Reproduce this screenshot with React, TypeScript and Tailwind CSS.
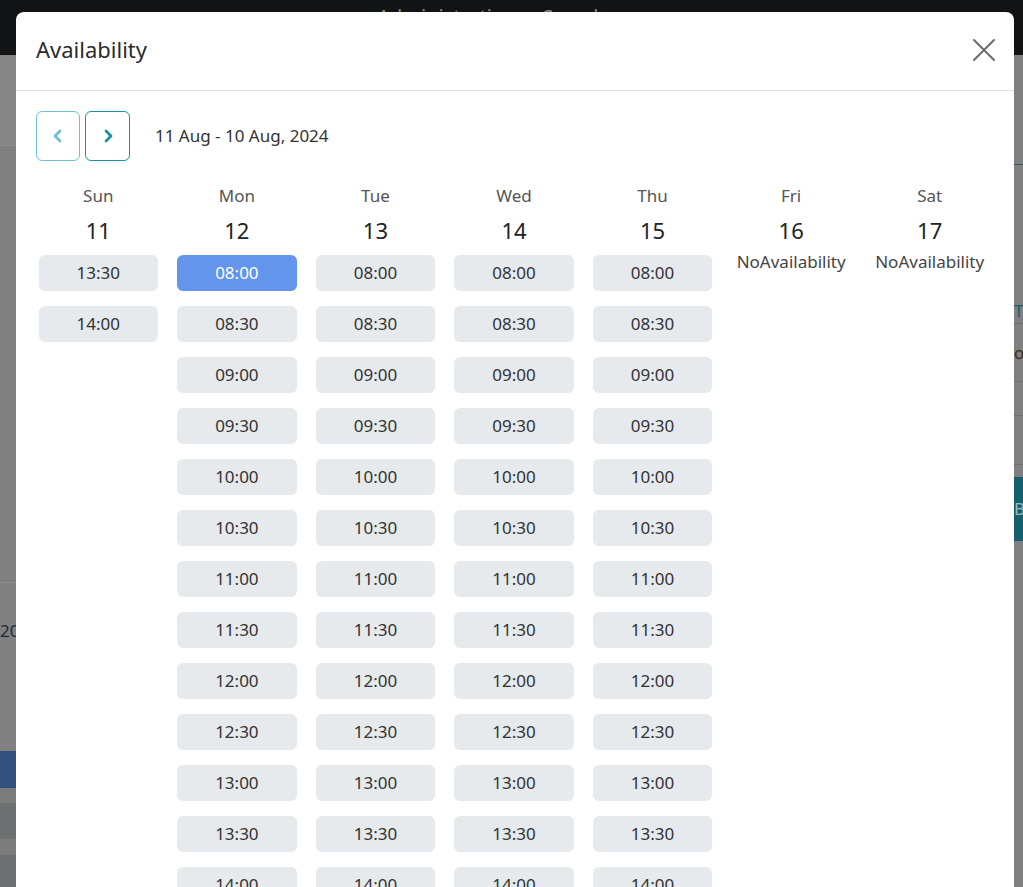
import React from "react";

const allSlots = [
  "08:00", "08:30", "09:00", "09:30", "10:00", "10:30", "11:00", "11:30",
  "12:00", "12:30", "13:00", "13:30", "14:00", "14:30", "15:00", "15:30",
];

const days = [
  { name: "Sun", date: 11, slots: ["13:30", "14:00"] },
  { name: "Mon", date: 12, slots: allSlots },
  { name: "Tue", date: 13, slots: allSlots },
  { name: "Wed", date: 14, slots: allSlots },
  { name: "Thu", date: 15, slots: allSlots },
  { name: "Fri", date: 16, slots: [] as string[] },
  { name: "Sat", date: 17, slots: [] as string[] },
];

function Chevron({ dir }: { dir: "left" | "right" }) {
  return (
    <svg width="18" height="18" viewBox="0 0 18 18" fill="none" stroke="currentColor" strokeWidth="2.8" strokeLinecap="round" strokeLinejoin="round">
      {dir === "left" ? <path d="M11 4 6 9l5 5" /> : <path d="M7 4l5 5-5 5" />}
    </svg>
  );
}

export default function App() {
  return (
    <div className="relative h-[887px] w-full overflow-hidden bg-[#808080] font-['Noto_Sans',sans-serif]">
      {/* page behind the dialog */}
      <div className="flex h-[55px] justify-center bg-[#121315] pt-[2px] text-[20px] text-[#8a8b8d]">
        <span className="ml-[-40px]">Administration &nbsp;&nbsp;&nbsp; Search</span>
      </div>
      <div className="flex justify-between">
        <div className="flex w-4 flex-col overflow-hidden whitespace-nowrap">
          <div className="h-[90px] bg-[#858585]" />
          <div className="h-px bg-[#8c8c8c]" />
          <div className="h-[436px]" />
          <div className="h-px bg-[#8d8d8d]" />
          <div className="h-[36px]" />
          <div className="text-[17px] leading-6 text-[#1d2a36]">20</div>
          <div className="h-[108px]" />
          <div className="h-[37px] bg-[#34507f]" />
          <div className="h-[15px] bg-[#7c7c7c]" />
          <div className="h-[36px] bg-[#6d7070]" />
          <div className="h-[16px] bg-[#7c7c7c]" />
          <div className="h-[40px] bg-[#6d7070]" />
        </div>
        <div className="flex w-[9px] flex-col overflow-hidden whitespace-nowrap">
          <div className="h-[109px]" />
          <div className="h-px bg-[#1f5f69]" />
          <div className="h-[134px]" />
          <div className="text-[17px] leading-6 text-[#135e6b]">Ti</div>
          <div className="h-px bg-[#6e6e6e]" />
          <div className="flex h-[58px] items-center border-b border-[#707070] text-[17px] text-[#3a2a10]">o .</div>
          <div className="h-[34px] border-b border-[#707070]" />
          <div className="h-[49px] border-b border-[#707070]" />
          <div className="h-[12px]" />
          <div className="flex h-[64px] items-center bg-[#145f6b] text-[17px] text-[#9fb8bd]">Bo</div>
        </div>
      </div>

      {/* dialog */}
      <div className="absolute left-4 top-3 w-[998px] rounded-lg bg-white">
        <div className="flex h-[79px] items-center justify-between border-b border-[#dee2e6] pb-[3px] pl-5 pr-[19px]">
          <h2 className="text-[22px] text-[#2b2b2b]">Availability</h2>
          <button className="text-[#6c6c6c]">
            <svg width="22" height="22" viewBox="0 0 22 22" fill="none" stroke="currentColor" strokeWidth="2" strokeLinecap="round">
              <path d="M1 1l20 20M21 1 1 21" />
            </svg>
          </button>
        </div>

        <div className="pt-5">
          <div className="flex items-center pl-5">
            <button className="flex h-[50px] w-[44px] items-center justify-center rounded-md border border-[#6fc0d1] text-[#6fc0d1]">
              <Chevron dir="left" />
            </button>
            <button className="ml-[5px] flex h-[50px] w-[45px] items-center justify-center rounded-md border border-[#1a8fa6] text-[#1a8fa6]">
              <Chevron dir="right" />
            </button>
            <span className="ml-[25px] text-[17px] text-[#333]">11 Aug - 10 Aug, 2024</span>
          </div>

          <div className="mt-[23px] grid grid-cols-7 pl-[13px] pr-[15px]">
            {days.map((d) => (
              <div key={d.name} className="flex flex-col items-center">
                <div className="text-[17px] leading-6 text-[#555]">{d.name}</div>
                <div className="mt-[8px] text-[22px] leading-[28px] text-[#222]">{d.date}</div>
                {d.slots.length === 0 ? (
                  <div className="mt-[6px] text-[17px] leading-6 text-[#444]">NoAvailability</div>
                ) : (
                  <div className="mt-[11px] flex flex-col items-center gap-[15px]">
                    {d.slots.map((s) => {
                      const active = d.name === "Mon" && s === "08:00";
                      return (
                        <button
                          key={s}
                          className={
                            active
                              ? "flex h-9 items-center rounded-md bg-[#6495ed] px-[38px] text-[17px] text-white"
                              : "flex h-9 items-center rounded-md bg-[#e6eaed] px-[38px] text-[17px] text-[#333]"
                          }
                        >
                          {s}
                        </button>
                      );
                    })}
                  </div>
                )}
              </div>
            ))}
          </div>
        </div>
      </div>
    </div>
  );
}
